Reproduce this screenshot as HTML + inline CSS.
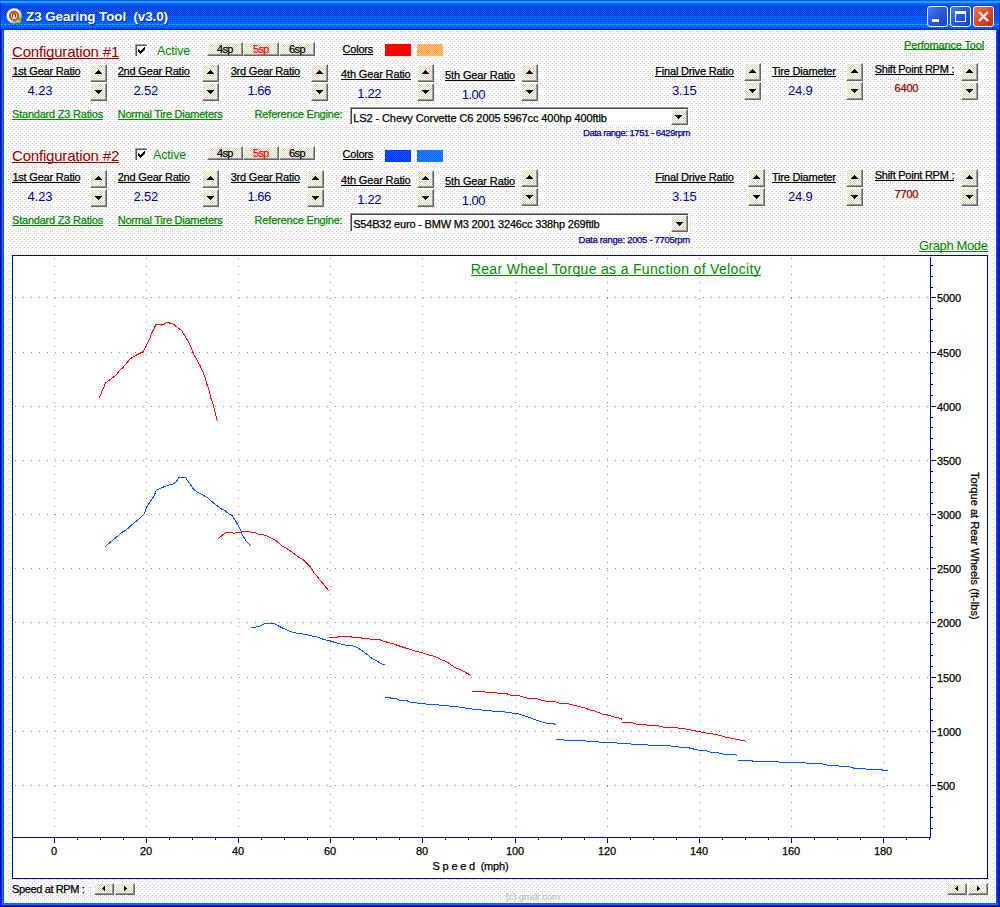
<!DOCTYPE html>
<html lang="en">
<head>
<meta charset="utf-8">
<title>Z3 Gearing Tool (v3.0)</title>
<style>
html,body{margin:0;padding:0}
body{width:1000px;height:907px;position:relative;overflow:hidden;background:#0044dd;font-family:"Liberation Sans",sans-serif;font-size:11px}
#win{position:absolute;left:0;top:0;width:1000px;height:907px;overflow:hidden}
#bg{position:absolute;left:0;top:0}
.t{position:absolute;white-space:pre;display:block}
.s{-webkit-text-stroke:0.25px}
.wb{background:#fff}
.ttl{text-shadow:1px 1px 0 #0a2a9c}
.ul{position:absolute;height:1px;display:block}
.sp{position:absolute;width:15px;height:16px;background:repeating-conic-gradient(#d4d4cc 0 25%,#ffffea 0 50%) 0 0/2px 2px;border-top:1px solid #fffff2;border-left:1px solid #fffff2;border-right:1px solid #666;border-bottom:1px solid #666;box-shadow:inset -1px -1px 0 #999}
.ar{position:absolute;display:block;shape-rendering:crispEdges}
.sp .up{left:4px;top:5px}
.sp .dn{left:4px;top:6px}
.btn{position:absolute;width:34px;height:12px;background:repeating-conic-gradient(#d4d4cc 0 25%,#ffffea 0 50%) 0 0/2px 2px;border-top:1px solid #fffff2;border-left:1px solid #fffff2;border-right:1px solid #666;border-bottom:1px solid #666;box-shadow:inset -1px -1px 0 #999}
.chk{position:absolute;width:11px;height:11px;background:#fff;border-top:1px solid #aaa;border-left:1px solid #999;box-shadow:inset 1px 1px 0 #555}
.chk svg{position:absolute;left:2px;top:2px;shape-rendering:crispEdges}
.sw{position:absolute;width:26px;height:12px}
.combo{position:absolute;width:337px;height:16px;background:#fff;border:1px solid;border-color:#999 #fff #fff #999;box-shadow:inset 1px 1px 0 #444}
.cbtn{position:absolute;right:0;top:1px;width:15px;height:14px;background:repeating-conic-gradient(#d4d4cc 0 25%,#ffffea 0 50%) 0 0/2px 2px;border-top:1px solid #fffff2;border-left:1px solid #fffff2;border-right:1px solid #666;border-bottom:1px solid #666;box-shadow:inset -1px -1px 0 #999}
.cbtn .dn{left:3px;top:5px}
.hb{position:absolute;width:18px;height:10px;background:repeating-conic-gradient(#d4d4cc 0 25%,#ffffea 0 50%) 0 0/2px 2px;border-top:1px solid #fffff2;border-left:1px solid #fffff2;border-right:1px solid #666;border-bottom:1px solid #666;box-shadow:inset -1px -1px 0 #999}
.hb .lf{left:7px;top:2px}
.hb .rt{left:8px;top:2px}
.tb{position:absolute;top:6px;width:19px;height:19px;border:1px solid #f0f4ff;border-radius:3px;background:linear-gradient(135deg,#4a7af0 0%,#2a58dc 50%,#1840c4 100%)}
.gd{stroke:#888;stroke-width:1;stroke-dasharray:1 7;fill:none;shape-rendering:crispEdges}
.ax{stroke:#000099;stroke-width:1;fill:none;shape-rendering:crispEdges}
.cv{fill:none;stroke-width:1;stroke-linejoin:round;shape-rendering:crispEdges}
</style>
</head>
<body>
<div id="win">
<svg id="bg" width="1000" height="907" viewBox="0 0 1000 907">
<defs>
<pattern id="dth" width="8" height="8" patternUnits="userSpaceOnUse" shape-rendering="crispEdges">
<rect width="8" height="8" fill="#fff"/>
<path fill="#ccc" d="M2 1h1v1h-1zM6 1h1v1h-1zM0 3h1v1h-1zM4 3h1v1h-1zM2 5h1v1h-1zM6 5h1v1h-1zM0 7h1v1h-1zM2 7h1v1h-1zM4 7h1v1h-1z"/>
</pattern>
<pattern id="chk" width="2" height="2" patternUnits="userSpaceOnUse" shape-rendering="crispEdges">
<rect width="2" height="2" fill="#0066ff"/>
<path fill="#0033cc" d="M0 0h1v1h-1zM1 1h1v1h-1z"/>
</pattern>
<pattern id="d2" width="2" height="1" patternUnits="userSpaceOnUse" shape-rendering="crispEdges">
<rect width="2" height="1" fill="#0066ff"/><rect width="1" height="1" fill="#0033cc"/>
</pattern>
<pattern id="d4" width="4" height="1" patternUnits="userSpaceOnUse" shape-rendering="crispEdges">
<rect width="4" height="1" fill="#0066ff"/><rect width="1" height="1" fill="#0044aa"/>
</pattern>
<pattern id="l4" width="4" height="1" patternUnits="userSpaceOnUse" shape-rendering="crispEdges">
<rect width="4" height="1" fill="#0066ff"/><rect width="1" height="1" fill="#2f8cff"/><rect x="1" width="1" height="1" fill="#33aaff"/><rect x="2" width="1" height="1" fill="#2f8cff"/>
</pattern>
</defs>
<!-- window frame -->
<rect x="0" y="0" width="1000" height="907" fill="#0055ee"/>
<rect x="0" y="30" width="1" height="877" fill="#0011cc"/>
<rect x="1" y="30" width="1" height="877" fill="#0033cc"/>
<rect x="2" y="30" width="1" height="877" fill="#2266ee"/>
<rect x="3" y="30" width="1" height="877" fill="#0066cc"/>
<rect x="996" y="30" width="1" height="877" fill="#0055ff"/>
<rect x="997" y="30" width="1" height="877" fill="#0033e0"/>
<rect x="998" y="30" width="1" height="877" fill="#0022b0"/>
<rect x="999" y="30" width="1" height="877" fill="#001aa0"/>
<rect x="2" y="903" width="996" height="1" fill="#0066ff"/>
<rect x="2" y="904" width="996" height="1" fill="#2266ff"/>
<rect x="1" y="905" width="998" height="1" fill="#0033cc"/>
<rect x="0" y="906" width="1000" height="1" fill="#000099"/>
<!-- title bar -->
<rect x="0" y="0" width="1000" height="30" fill="#0066ff"/>
<rect x="0" y="0" width="1000" height="1" fill="#0060f0"/>
<rect x="0" y="1" width="1000" height="2" fill="#3399ff"/>
<rect x="0" y="5" width="1000" height="11" fill="url(#chk)"/>
<rect x="0" y="17" width="1000" height="1" fill="url(#d2)"/>
<rect x="1" y="19" width="1000" height="1" fill="url(#d2)"/>
<rect x="0" y="21" width="1000" height="1" fill="url(#d4)"/>
<rect x="0" y="24" width="1000" height="1" fill="url(#l4)"/>
<rect x="0" y="27" width="1000" height="1" fill="url(#d4)"/>
<rect x="0" y="28" width="1000" height="1" fill="url(#chk)"/>
<rect x="0" y="29" width="1000" height="1" fill="#0033cc"/>
<rect x="0" y="3" width="1" height="27" fill="#0033cc"/>
<rect x="999" y="3" width="1" height="27" fill="#0033cc"/>
<!-- client -->
<rect x="4" y="30" width="992" height="873" fill="url(#dth)"/>
</svg>
<!-- title icon -->
<svg style="position:absolute;left:5px;top:7px" width="19" height="19" viewBox="0 0 19 19"><defs><radialGradient id="ig" cx="0.3" cy="0.3" r="0.9"><stop offset="0" stop-color="#fff"/><stop offset="0.45" stop-color="#f4f2ee"/><stop offset="1" stop-color="#7a8a6a"/></radialGradient></defs><circle cx="9.3" cy="9" r="8" fill="url(#ig)" stroke="#222" stroke-opacity="0.45" stroke-width="0.7"/><circle cx="9" cy="8.8" r="4.2" fill="#f3e6d8" stroke="#b43a08" stroke-width="1.7"/><path d="M7.4 10.6v-2.9q0-1.1 1.6-1.1q1.6 0 1.6 1.1v2.9" fill="none" stroke="#8c1c00" stroke-width="1.1"/><rect x="12.2" y="10.5" width="3" height="2.4" fill="#58a832"/><rect x="12.6" y="13.2" width="3" height="2.6" fill="#e8c400"/><rect x="8" y="13" width="3.5" height="2.5" fill="#8a6ab0" opacity="0.6"/></svg>
<div class="tb" style="left:927px"><i style="position:absolute;left:4px;top:12px;width:7px;height:3px;background:#fff"></i></div>
<div class="tb" style="left:950px"><i style="position:absolute;left:4px;top:4px;width:9px;height:7px;border:1px solid #fff;border-top-width:3px"></i></div>
<div class="tb" style="left:973px;background:linear-gradient(135deg,#ec7a52 0%,#d8482a 50%,#b83010 100%)"><svg width="19" height="19" viewBox="0 0 19 19" style="position:absolute;left:0;top:0"><path d="M5 5L14 14M14 5L5 14" stroke="#fff" stroke-width="2.2"/></svg></div>

<div class="sp" style="left:90px;top:64px"><svg class="ar up" width="7" height="4" viewBox="0 0 7 4"><path d="M3 0h1v1h1v1h1v1h1v1H0V3h1V2h1V1h1z"/></svg></div>
<div class="sp" style="left:90px;top:83px"><svg class="ar dn" width="7" height="4" viewBox="0 0 7 4"><path d="M0 0h7v1H6v1H5v1H4v1H3V3H2V2H1V1H0z"/></svg></div>
<div class="sp" style="left:202px;top:64px"><svg class="ar up" width="7" height="4" viewBox="0 0 7 4"><path d="M3 0h1v1h1v1h1v1h1v1H0V3h1V2h1V1h1z"/></svg></div>
<div class="sp" style="left:202px;top:83px"><svg class="ar dn" width="7" height="4" viewBox="0 0 7 4"><path d="M0 0h7v1H6v1H5v1H4v1H3V3H2V2H1V1H0z"/></svg></div>
<div class="sp" style="left:311px;top:64px"><svg class="ar up" width="7" height="4" viewBox="0 0 7 4"><path d="M3 0h1v1h1v1h1v1h1v1H0V3h1V2h1V1h1z"/></svg></div>
<div class="sp" style="left:311px;top:83px"><svg class="ar dn" width="7" height="4" viewBox="0 0 7 4"><path d="M0 0h7v1H6v1H5v1H4v1H3V3H2V2H1V1H0z"/></svg></div>
<div class="sp" style="left:417px;top:64px"><svg class="ar up" width="7" height="4" viewBox="0 0 7 4"><path d="M3 0h1v1h1v1h1v1h1v1H0V3h1V2h1V1h1z"/></svg></div>
<div class="sp" style="left:417px;top:83px"><svg class="ar dn" width="7" height="4" viewBox="0 0 7 4"><path d="M0 0h7v1H6v1H5v1H4v1H3V3H2V2H1V1H0z"/></svg></div>
<div class="sp" style="left:521px;top:64px"><svg class="ar up" width="7" height="4" viewBox="0 0 7 4"><path d="M3 0h1v1h1v1h1v1h1v1H0V3h1V2h1V1h1z"/></svg></div>
<div class="sp" style="left:521px;top:83px"><svg class="ar dn" width="7" height="4" viewBox="0 0 7 4"><path d="M0 0h7v1H6v1H5v1H4v1H3V3H2V2H1V1H0z"/></svg></div>
<div class="sp" style="left:744px;top:63px"><svg class="ar up" width="7" height="4" viewBox="0 0 7 4"><path d="M3 0h1v1h1v1h1v1h1v1H0V3h1V2h1V1h1z"/></svg></div>
<div class="sp" style="left:744px;top:82px"><svg class="ar dn" width="7" height="4" viewBox="0 0 7 4"><path d="M0 0h7v1H6v1H5v1H4v1H3V3H2V2H1V1H0z"/></svg></div>
<div class="sp" style="left:846px;top:63px"><svg class="ar up" width="7" height="4" viewBox="0 0 7 4"><path d="M3 0h1v1h1v1h1v1h1v1H0V3h1V2h1V1h1z"/></svg></div>
<div class="sp" style="left:846px;top:82px"><svg class="ar dn" width="7" height="4" viewBox="0 0 7 4"><path d="M0 0h7v1H6v1H5v1H4v1H3V3H2V2H1V1H0z"/></svg></div>
<div class="sp" style="left:961px;top:63px"><svg class="ar up" width="7" height="4" viewBox="0 0 7 4"><path d="M3 0h1v1h1v1h1v1h1v1H0V3h1V2h1V1h1z"/></svg></div>
<div class="sp" style="left:961px;top:82px"><svg class="ar dn" width="7" height="4" viewBox="0 0 7 4"><path d="M0 0h7v1H6v1H5v1H4v1H3V3H2V2H1V1H0z"/></svg></div>
<div class="sp" style="left:90px;top:170px"><svg class="ar up" width="7" height="4" viewBox="0 0 7 4"><path d="M3 0h1v1h1v1h1v1h1v1H0V3h1V2h1V1h1z"/></svg></div>
<div class="sp" style="left:90px;top:189px"><svg class="ar dn" width="7" height="4" viewBox="0 0 7 4"><path d="M0 0h7v1H6v1H5v1H4v1H3V3H2V2H1V1H0z"/></svg></div>
<div class="sp" style="left:202px;top:170px"><svg class="ar up" width="7" height="4" viewBox="0 0 7 4"><path d="M3 0h1v1h1v1h1v1h1v1H0V3h1V2h1V1h1z"/></svg></div>
<div class="sp" style="left:202px;top:189px"><svg class="ar dn" width="7" height="4" viewBox="0 0 7 4"><path d="M0 0h7v1H6v1H5v1H4v1H3V3H2V2H1V1H0z"/></svg></div>
<div class="sp" style="left:307px;top:170px"><svg class="ar up" width="7" height="4" viewBox="0 0 7 4"><path d="M3 0h1v1h1v1h1v1h1v1H0V3h1V2h1V1h1z"/></svg></div>
<div class="sp" style="left:307px;top:189px"><svg class="ar dn" width="7" height="4" viewBox="0 0 7 4"><path d="M0 0h7v1H6v1H5v1H4v1H3V3H2V2H1V1H0z"/></svg></div>
<div class="sp" style="left:417px;top:170px"><svg class="ar up" width="7" height="4" viewBox="0 0 7 4"><path d="M3 0h1v1h1v1h1v1h1v1H0V3h1V2h1V1h1z"/></svg></div>
<div class="sp" style="left:417px;top:189px"><svg class="ar dn" width="7" height="4" viewBox="0 0 7 4"><path d="M0 0h7v1H6v1H5v1H4v1H3V3H2V2H1V1H0z"/></svg></div>
<div class="sp" style="left:521px;top:169px"><svg class="ar up" width="7" height="4" viewBox="0 0 7 4"><path d="M3 0h1v1h1v1h1v1h1v1H0V3h1V2h1V1h1z"/></svg></div>
<div class="sp" style="left:521px;top:188px"><svg class="ar dn" width="7" height="4" viewBox="0 0 7 4"><path d="M0 0h7v1H6v1H5v1H4v1H3V3H2V2H1V1H0z"/></svg></div>
<div class="sp" style="left:748px;top:169px"><svg class="ar up" width="7" height="4" viewBox="0 0 7 4"><path d="M3 0h1v1h1v1h1v1h1v1H0V3h1V2h1V1h1z"/></svg></div>
<div class="sp" style="left:748px;top:188px"><svg class="ar dn" width="7" height="4" viewBox="0 0 7 4"><path d="M0 0h7v1H6v1H5v1H4v1H3V3H2V2H1V1H0z"/></svg></div>
<div class="sp" style="left:846px;top:169px"><svg class="ar up" width="7" height="4" viewBox="0 0 7 4"><path d="M3 0h1v1h1v1h1v1h1v1H0V3h1V2h1V1h1z"/></svg></div>
<div class="sp" style="left:846px;top:188px"><svg class="ar dn" width="7" height="4" viewBox="0 0 7 4"><path d="M0 0h7v1H6v1H5v1H4v1H3V3H2V2H1V1H0z"/></svg></div>
<div class="sp" style="left:961px;top:169px"><svg class="ar up" width="7" height="4" viewBox="0 0 7 4"><path d="M3 0h1v1h1v1h1v1h1v1H0V3h1V2h1V1h1z"/></svg></div>
<div class="sp" style="left:961px;top:188px"><svg class="ar dn" width="7" height="4" viewBox="0 0 7 4"><path d="M0 0h7v1H6v1H5v1H4v1H3V3H2V2H1V1H0z"/></svg></div>
<div class="btn" style="left:207px;top:42px"></div>
<div class="btn" style="left:243px;top:42px"></div>
<div class="btn" style="left:279px;top:42px"></div>
<div class="chk" style="left:135px;top:44px"><svg width="7" height="7" viewBox="0 0 7 7"><path d="M0 2h1v1h1v1h1V3h1V2h1V1h1V0h1v3H6v1H5v1H4v1H3v1H2V6H1V5H0z"/></svg></div>
<div class="btn" style="left:207px;top:146px"></div>
<div class="btn" style="left:243px;top:146px"></div>
<div class="btn" style="left:279px;top:146px"></div>
<div class="chk" style="left:135px;top:148px"><svg width="7" height="7" viewBox="0 0 7 7"><path d="M0 2h1v1h1v1h1V3h1V2h1V1h1V0h1v3H6v1H5v1H4v1H3v1H2V6H1V5H0z"/></svg></div>
<div class="sw" style="left:385px;top:44px;background:#ff0000"></div>
<div class="sw" style="left:417px;top:44px;background:repeating-conic-gradient(#ff9966 0 25%,#ffcc66 0 50%) 0 0/2px 2px"></div>
<div class="sw" style="left:385px;top:150px;background:repeating-conic-gradient(#0033ff 0 25%,#0055ff 0 50%) 0 0/2px 2px"></div>
<div class="sw" style="left:417px;top:150px;background:repeating-conic-gradient(#0066ff 0 25%,#2a85ff 0 50%) 0 0/2px 2px"></div>
<div class="combo" style="left:350px;top:107px;height:16px"><div class="cbtn" style="height:14px"><svg class="ar dn" style="top:5px;left:3px" width="7" height="4" viewBox="0 0 7 4"><path d="M0 0h7v1H6v1H5v1H4v1H3V3H2V2H1V1H0z"/></svg></div></div>
<div class="combo" style="left:350px;top:213px;height:17px"><div class="cbtn" style="height:15px"><svg class="ar dn" style="top:6px;left:4px" width="7" height="4" viewBox="0 0 7 4"><path d="M0 0h7v1H6v1H5v1H4v1H3V3H2V2H1V1H0z"/></svg></div></div>
<div class="hb" style="left:94px;top:883px"><svg class="ar lf" width="3" height="5" viewBox="0 0 3 5"><path d="M2 0h1v5H2V4H1V3H0V2h1V1h1z"/></svg></div>
<div class="hb" style="left:115px;top:883px"><svg class="ar rt" width="3" height="5" viewBox="0 0 3 5"><path d="M0 0h1v1h1v1h1v1H2v1H1v1H0z"/></svg></div>
<div class="hb" style="left:947px;top:883px"><svg class="ar lf" width="3" height="5" viewBox="0 0 3 5"><path d="M2 0h1v5H2V4H1V3H0V2h1V1h1z"/></svg></div>
<div class="hb" style="left:968px;top:883px"><svg class="ar rt" width="3" height="5" viewBox="0 0 3 5"><path d="M0 0h1v1h1v1h1v1H2v1H1v1H0z"/></svg></div>
<!-- graph -->
<svg style="position:absolute;left:0;top:0" width="1000" height="907" viewBox="0 0 1000 907">
<rect x="12.5" y="255.5" width="975" height="623" fill="#fff" stroke="#000099" stroke-width="1" shape-rendering="crispEdges"/>
<line x1="54.5" y1="258" x2="54.5" y2="830" class="gd"/>
<line x1="146.5" y1="258" x2="146.5" y2="830" class="gd"/>
<line x1="238.5" y1="258" x2="238.5" y2="830" class="gd"/>
<line x1="330.5" y1="258" x2="330.5" y2="830" class="gd"/>
<line x1="422.5" y1="258" x2="422.5" y2="830" class="gd"/>
<line x1="515.5" y1="258" x2="515.5" y2="830" class="gd"/>
<line x1="607.5" y1="258" x2="607.5" y2="830" class="gd"/>
<line x1="699.5" y1="258" x2="699.5" y2="830" class="gd"/>
<line x1="791.5" y1="258" x2="791.5" y2="830" class="gd"/>
<line x1="883.5" y1="258" x2="883.5" y2="830" class="gd"/>
<line x1="15" y1="297.5" x2="930" y2="297.5" class="gd"/>
<line x1="15" y1="352.5" x2="930" y2="352.5" class="gd"/>
<line x1="15" y1="406.5" x2="930" y2="406.5" class="gd"/>
<line x1="15" y1="460.5" x2="930" y2="460.5" class="gd"/>
<line x1="15" y1="514.5" x2="930" y2="514.5" class="gd"/>
<line x1="15" y1="568.5" x2="930" y2="568.5" class="gd"/>
<line x1="15" y1="622.5" x2="930" y2="622.5" class="gd"/>
<line x1="15" y1="677.5" x2="930" y2="677.5" class="gd"/>
<line x1="15" y1="731.5" x2="930" y2="731.5" class="gd"/>
<line x1="15" y1="785.5" x2="930" y2="785.5" class="gd"/>
<path class="ax" d="M12 837.5H931M930.5 257V838M54.5 838v5M77.5 838v2M100.5 838v2M123.5 838v2M146.5 838v5M169.5 838v2M192.5 838v2M215.5 838v2M238.5 838v5M261.5 838v2M284.5 838v2M307.5 838v2M330.5 838v5M353.5 838v2M376.5 838v2M399.5 838v2M422.5 838v5M445.5 838v2M468.5 838v2M491.5 838v2M515.5 838v5M538.5 838v2M561.5 838v2M584.5 838v2M607.5 838v5M630.5 838v2M653.5 838v2M676.5 838v2M699.5 838v5M722.5 838v2M745.5 838v2M768.5 838v2M791.5 838v5M814.5 838v2M837.5 838v2M860.5 838v2M883.5 838v5M906.5 838v2M929.5 838v2M931 265.5h2M931 276.5h2M931 287.5h2M931 297.5h5M931 308.5h2M931 319.5h2M931 330.5h2M931 341.5h2M931 352.5h5M931 362.5h2M931 373.5h2M931 384.5h2M931 395.5h2M931 406.5h5M931 417.5h2M931 427.5h2M931 438.5h2M931 449.5h2M931 460.5h5M931 471.5h2M931 482.5h2M931 492.5h2M931 503.5h2M931 514.5h5M931 525.5h2M931 536.5h2M931 547.5h2M931 557.5h2M931 568.5h5M931 579.5h2M931 590.5h2M931 601.5h2M931 612.5h2M931 622.5h5M931 633.5h2M931 644.5h2M931 655.5h2M931 666.5h2M931 677.5h5M931 687.5h2M931 698.5h2M931 709.5h2M931 720.5h2M931 731.5h5M931 742.5h2M931 752.5h2M931 763.5h2M931 774.5h2M931 785.5h5M931 796.5h2M931 807.5h2M931 817.5h2M931 828.5h2"/>
<polyline points="99.4,397.5 105.7,382.8 112.4,377.9 115.9,375.1 120.5,369.5 122.9,367.7 129.9,359 136.2,355.2 143.2,351.7 145.3,347.8 147.4,342.9 149.9,338.7 151.6,333.1 154.4,328.2 155.8,324.4 158.6,324 161.1,325.1 164.2,324.3 166.7,322.6 168.4,322.3 169.8,323.3 172.6,323.6 175.7,326.1 181.7,330.7 186.6,338.7 190.8,346.7 193.6,354.1 196.4,358.7 200.6,366.7 205.1,377.2 206.9,384.2 209.4,390.9 211.1,398.9 213.2,404.5 215.3,413.6 217.4,421.3" stroke="#ff0000" class="cv"/>
<polyline points="218.5,538.5 225.6,532.4 231.5,532.4 234.1,533.4 237.3,532.4 243.8,531.7 249,531.4 251,532.4 255.5,532.6 258.8,534.3 262,534.6 266.6,535.6 271.1,538.2 275.7,540.4 282.8,546.4 288.7,549.6 295.8,555.1 299.7,558 303,559.7 310.8,567.5 314,572.7 320.5,580.5 328.6,590.6" stroke="#ff0000" class="cv"/>
<polyline points="329.1,637.3 336.8,637.3 339.2,636.3 350.4,636.3 352,637.3 360,637.3 362.4,638.4 368.8,638.4 371.2,639.5 379.2,639.5 384,641.3 393.6,644 406.4,648.3 416,651.2 422.4,652.8 430.4,655.5 435.2,656.5 441.6,659.7 446.4,661.6 454.4,667.2 460.8,669.9 471.2,675.5" stroke="#ff0000" class="cv"/>
<polyline points="472,691.4 484,691.4 486,692.4 496,692.4 498,693.4 506,693.4 510,695 518,695.4 524,697.4 529,698.4 536,698.4 541,700 547,701.4 554,701.4 560,703.4 567,703.6 577,706 585,708 590,710 595,711 602,714 609,715.4 615,717.4 621,718.4 622,719.4" stroke="#ff0000" class="cv"/>
<polyline points="622,722.4 631,722.4 637,724.4 646,724.4 648,725.4 657.5,725.5 665,727.5 673.75,727.5 685,728.75 697.5,731.25 707.5,733.25 717.5,734.75 725,737 735,739 746.25,741.25" stroke="#ff0000" class="cv"/>
<polyline points="105.2,546.6 116.3,537.3 122.2,532.2 125.6,530.5 134.1,522.8 137.5,520.3 144.3,513.5 146.9,506.7 150.3,501.6 153.7,496.5 156.5,490.2 166.4,485.7 173.2,484 175.8,482 179.2,477.4 185.4,477.4 188.5,482 193.6,489.3 197,491.9 203.8,495.6 207.2,497.6 214,503.3 221.7,509.2 225.1,510.6 229.3,514.3 231.9,515.2 235.3,520.3 239.5,527.9 242.9,535.6 246.3,541.5 250.6,545.8" stroke="#0055ff" class="cv"/>
<polyline points="251.2,627.3 255.2,627.1 260,626 265.6,623.3 273.6,623.3 280,626.8 288,630.5 294.4,632.9 300.8,633.5 307.2,634.8 313.6,636.4 319.2,637.5 323.2,639.3 329.6,640.7 336,642.8 345.6,645.2 351.2,645.5 355.2,646.5 360.8,649.7 366.4,654 372,658.3 377.6,661.5 382.4,664.1 384.8,664.6" stroke="#0055ff" class="cv"/>
<polyline points="385.4,697.4 390,697.4 391,698.4 396,698.4 400,700.4 406,700.4 411,702.4 416,702.4 418,703.4 425,703.4 427,704.4 438,704.4 440,705.4 448,705.4 450,706.4 458,706.4 460,707.4 464,707.4 466,708.4 471,708.4 473,709.4 481,709.4 483,710.4 491,710.4 493,711.4 504,711.4 506,712.4 511,712.4 513,713.4 517,713.4 527,716.6 537,720.4 547,723.4 553,723.4 555.6,724.4" stroke="#0055ff" class="cv"/>
<polyline points="556,739.4 563,739.4 565,740.4 585,740.4 587,741.4 598,741.4 600,742.4 616,742.4 618,743.4 630,743.4 632,744.4 647,744.4 649,745.4 670,745.5 672.5,746.5 677.5,746.5 680,747.5 687.5,747.5 697.5,750 705,750.5 710,752 717.5,752.5 723.75,754.25 735,754.5 737.5,755.5" stroke="#0055ff" class="cv"/>
<polyline points="738.25,760.5 751.25,760.5 753.75,761.5 777.5,761.5 780,762.5 805,762.5 807.5,763.5 821.25,763.5 828.75,765.5 837.5,765.5 840,766.5 848.75,766.5 855,768.5 865,768.5 867.5,769.5 881.25,769.5 883.75,770.5 887.5,770.5" stroke="#0055ff" class="cv"/>
</svg>
<span class="t ttl" style="left:26px;top:10.37px;font-size:13.5px;line-height:13.5px;color:#fff;letter-spacing:-0.11px;font-weight:bold;">Z3 Gearing Tool  (v3.0)</span>
<span class="t" style="left:12px;top:44.3px;font-size:15px;line-height:15px;color:#990000;letter-spacing:-0.19px;">Configuration #1</span>
<i class="ul" style="left:12px;top:58px;width:107px;background:#990000"></i>
<span class="t" style="left:157px;top:45.02px;font-size:12.5px;line-height:12.5px;color:#008600;letter-spacing:-0.17px;">Active</span>
<span class="t s" style="left:217px;top:43.69px;font-size:11px;line-height:11px;color:#000;letter-spacing:-0.72px;">4sp</span>
<span class="t s" style="left:253px;top:43.69px;font-size:11px;line-height:11px;color:#ff0000;letter-spacing:-0.68px;">5sp</span>
<span class="t s" style="left:289px;top:43.69px;font-size:11px;line-height:11px;color:#000;letter-spacing:-0.58px;">6sp</span>
<span class="t s" style="left:342.6px;top:44.09px;font-size:11px;line-height:11px;color:#000;letter-spacing:-0.23px;">Colors</span>
<i class="ul" style="left:343px;top:54px;width:30px;background:#000"></i>
<span class="t s" style="left:12.4px;top:65.69px;font-size:11px;line-height:11px;color:#000;letter-spacing:-0.2px;">1st Gear Ratio</span>
<i class="ul" style="left:12px;top:76px;width:68px;background:#000"></i>
<span class="t s" style="left:117.7px;top:65.69px;font-size:11px;line-height:11px;color:#000;letter-spacing:-0.19px;">2nd Gear Ratio</span>
<i class="ul" style="left:118px;top:76px;width:72px;background:#000"></i>
<span class="t s" style="left:230.7px;top:65.69px;font-size:11px;line-height:11px;color:#000;letter-spacing:-0.2px;">3rd Gear Ratio</span>
<i class="ul" style="left:231px;top:76px;width:69px;background:#000"></i>
<span class="t s" style="left:341px;top:68.89px;font-size:11px;line-height:11px;color:#000;letter-spacing:-0.14px;">4th Gear Ratio</span>
<i class="ul" style="left:341px;top:79px;width:70px;background:#000"></i>
<span class="t s" style="left:445px;top:69.99px;font-size:11px;line-height:11px;color:#000;letter-spacing:-0.11px;">5th Gear Ratio</span>
<i class="ul" style="left:445px;top:80px;width:70px;background:#000"></i>
<span class="t s" style="left:655.2px;top:65.69px;font-size:11px;line-height:11px;color:#000;letter-spacing:-0.17px;">Final Drive Ratio</span>
<i class="ul" style="left:655px;top:76px;width:79px;background:#000"></i>
<span class="t s" style="left:772px;top:65.69px;font-size:11px;line-height:11px;color:#000;letter-spacing:-0.2px;">Tire Diameter</span>
<i class="ul" style="left:772px;top:76px;width:64px;background:#000"></i>
<span class="t s" style="left:874.7px;top:64.09px;font-size:11px;line-height:11px;color:#000;letter-spacing:-0.25px;">Shift Point RPM :</span>
<i class="ul" style="left:875px;top:74px;width:79px;background:#000"></i>
<span class="t" style="left:27.6px;top:84px;font-size:13px;line-height:13px;color:#000099;letter-spacing:-0.13px;">4.23</span>
<span class="t" style="left:133.4px;top:84px;font-size:13px;line-height:13px;color:#000099;letter-spacing:-0.13px;">2.52</span>
<span class="t" style="left:247.6px;top:83.5px;font-size:13px;line-height:13px;color:#000099;letter-spacing:-0.55px;">1.66</span>
<span class="t" style="left:357.3px;top:86.6px;font-size:13px;line-height:13px;color:#000099;letter-spacing:-0.35px;">1.22</span>
<span class="t" style="left:461.7px;top:87.8px;font-size:13px;line-height:13px;color:#000099;letter-spacing:-0.48px;">1.00</span>
<span class="t" style="left:672px;top:84px;font-size:13px;line-height:13px;color:#000099;letter-spacing:-0.2px;">3.15</span>
<span class="t" style="left:788px;top:84px;font-size:13px;line-height:13px;color:#000099;letter-spacing:-0.23px;">24.9</span>
<span class="t s" style="left:894.5px;top:82.69px;font-size:11px;line-height:11px;color:#990000;letter-spacing:-0.17px;">6400</span>
<span class="t s" style="left:12px;top:108.69px;font-size:11px;line-height:11px;color:#008600;letter-spacing:-0.21px;">Standard Z3 Ratios</span>
<i class="ul" style="left:12px;top:119px;width:91px;background:#008600"></i>
<span class="t s" style="left:117.7px;top:108.69px;font-size:11px;line-height:11px;color:#008600;letter-spacing:-0.25px;">Normal Tire Diameters</span>
<i class="ul" style="left:118px;top:119px;width:104px;background:#008600"></i>
<span class="t s" style="left:254.6px;top:109.09px;font-size:11px;line-height:11px;color:#008600;letter-spacing:-0.19px;">Reference Engine:</span>
<span class="t s" style="left:353.2px;top:112.69px;font-size:11px;line-height:11px;color:#000;letter-spacing:-0.09px;">LS2 - Chevy Corvette C6 2005 5967cc 400hp 400ftlb</span>
<span class="t s" style="left:583px;top:127.96px;font-size:9.5px;line-height:9.5px;color:#000099;letter-spacing:-0.48px;">Data range: 1751 - 6429rpm</span>
<span class="t" style="left:12px;top:148.3px;font-size:15px;line-height:15px;color:#990000;letter-spacing:-0.19px;">Configuration #2</span>
<i class="ul" style="left:12px;top:162px;width:107px;background:#990000"></i>
<span class="t" style="left:153px;top:149.02px;font-size:12.5px;line-height:12.5px;color:#008600;letter-spacing:-0.17px;">Active</span>
<span class="t s" style="left:217px;top:147.69px;font-size:11px;line-height:11px;color:#000;letter-spacing:-0.72px;">4sp</span>
<span class="t s" style="left:253px;top:147.69px;font-size:11px;line-height:11px;color:#ff0000;letter-spacing:-0.68px;">5sp</span>
<span class="t s" style="left:289px;top:147.69px;font-size:11px;line-height:11px;color:#000;letter-spacing:-0.58px;">6sp</span>
<span class="t s" style="left:342.6px;top:149.09px;font-size:11px;line-height:11px;color:#000;letter-spacing:-0.23px;">Colors</span>
<i class="ul" style="left:343px;top:159px;width:30px;background:#000"></i>
<span class="t s" style="left:12.4px;top:171.69px;font-size:11px;line-height:11px;color:#000;letter-spacing:-0.2px;">1st Gear Ratio</span>
<i class="ul" style="left:12px;top:182px;width:68px;background:#000"></i>
<span class="t s" style="left:117.7px;top:171.69px;font-size:11px;line-height:11px;color:#000;letter-spacing:-0.19px;">2nd Gear Ratio</span>
<i class="ul" style="left:118px;top:182px;width:72px;background:#000"></i>
<span class="t s" style="left:230.7px;top:171.69px;font-size:11px;line-height:11px;color:#000;letter-spacing:-0.2px;">3rd Gear Ratio</span>
<i class="ul" style="left:231px;top:182px;width:69px;background:#000"></i>
<span class="t s" style="left:341px;top:174.89px;font-size:11px;line-height:11px;color:#000;letter-spacing:-0.14px;">4th Gear Ratio</span>
<i class="ul" style="left:341px;top:185px;width:70px;background:#000"></i>
<span class="t s" style="left:445px;top:175.99px;font-size:11px;line-height:11px;color:#000;letter-spacing:-0.11px;">5th Gear Ratio</span>
<i class="ul" style="left:445px;top:186px;width:70px;background:#000"></i>
<span class="t s" style="left:655.2px;top:171.69px;font-size:11px;line-height:11px;color:#000;letter-spacing:-0.17px;">Final Drive Ratio</span>
<i class="ul" style="left:655px;top:182px;width:79px;background:#000"></i>
<span class="t s" style="left:772px;top:171.69px;font-size:11px;line-height:11px;color:#000;letter-spacing:-0.2px;">Tire Diameter</span>
<i class="ul" style="left:772px;top:182px;width:64px;background:#000"></i>
<span class="t s" style="left:874.7px;top:170.09px;font-size:11px;line-height:11px;color:#000;letter-spacing:-0.25px;">Shift Point RPM :</span>
<i class="ul" style="left:875px;top:180px;width:79px;background:#000"></i>
<span class="t" style="left:27.6px;top:190px;font-size:13px;line-height:13px;color:#000099;letter-spacing:-0.13px;">4.23</span>
<span class="t" style="left:133.4px;top:190px;font-size:13px;line-height:13px;color:#000099;letter-spacing:-0.13px;">2.52</span>
<span class="t" style="left:247.6px;top:189.5px;font-size:13px;line-height:13px;color:#000099;letter-spacing:-0.55px;">1.66</span>
<span class="t" style="left:357.3px;top:192.6px;font-size:13px;line-height:13px;color:#000099;letter-spacing:-0.35px;">1.22</span>
<span class="t" style="left:461.7px;top:193.8px;font-size:13px;line-height:13px;color:#000099;letter-spacing:-0.48px;">1.00</span>
<span class="t" style="left:672px;top:190px;font-size:13px;line-height:13px;color:#000099;letter-spacing:-0.2px;">3.15</span>
<span class="t" style="left:788px;top:190px;font-size:13px;line-height:13px;color:#000099;letter-spacing:-0.23px;">24.9</span>
<span class="t s" style="left:894.5px;top:188.69px;font-size:11px;line-height:11px;color:#990000;letter-spacing:-0.17px;">7700</span>
<span class="t s" style="left:12px;top:214.69px;font-size:11px;line-height:11px;color:#008600;letter-spacing:-0.21px;">Standard Z3 Ratios</span>
<i class="ul" style="left:12px;top:225px;width:91px;background:#008600"></i>
<span class="t s" style="left:117.7px;top:214.69px;font-size:11px;line-height:11px;color:#008600;letter-spacing:-0.25px;">Normal Tire Diameters</span>
<i class="ul" style="left:118px;top:225px;width:104px;background:#008600"></i>
<span class="t s" style="left:254.6px;top:215.09px;font-size:11px;line-height:11px;color:#008600;letter-spacing:-0.19px;">Reference Engine:</span>
<span class="t s" style="left:353.2px;top:218.69px;font-size:11px;line-height:11px;color:#000;letter-spacing:-0.19px;">S54B32 euro - BMW M3 2001 3246cc 338hp 269ftlb</span>
<span class="t s" style="left:578.6px;top:234.76px;font-size:9.5px;line-height:9.5px;color:#000099;letter-spacing:-0.31px;">Data range: 2005 - 7705rpm</span>
<span class="t s" style="left:904px;top:39.69px;font-size:11px;line-height:11px;color:#008600;letter-spacing:-0.16px;">Perfomance Tool</span>
<i class="ul" style="left:904px;top:49px;width:80px;background:#008600"></i>
<span class="t" style="left:919px;top:238.7px;font-size:13px;line-height:13px;color:#008600;letter-spacing:-0.37px;">Graph Mode</span>
<i class="ul" style="left:919px;top:251px;width:69px;background:#008600"></i>
<span class="t wb" style="left:470.8px;top:262.15px;font-size:14px;line-height:14px;color:#008600;letter-spacing:0.33px;">Rear Wheel Torque as a Function of Velocity</span>
<i class="ul" style="left:471px;top:275px;width:290px;background:#008600"></i>
<span class="t s" style="left:432.6px;top:861.29px;font-size:11px;line-height:11px;color:#000;letter-spacing:-0.19px;">S p e e d  (mph)</span>
<span class="t s" style="left:12px;top:884.49px;font-size:11px;line-height:11px;color:#000;letter-spacing:-0.37px;">Speed at RPM :</span>
<span class="t s rot" style="left:980.31px;top:472px;font-size:11px;line-height:11px;color:#000;letter-spacing:0.03px;transform-origin:0 0;transform:rotate(90deg);">Torque at Rear Wheels (ft-lbs)</span>
<span class="t s" style="left:505.4px;top:891.96px;font-size:9.5px;line-height:9.5px;color:#c4c4c4;letter-spacing:-0.07px;">(c) gmdr.com</span>
<span class="t s" style="left:51px;top:845.99px;font-size:11px;line-height:11px;color:#000;letter-spacing:-0.12px;">0</span>
<span class="t s" style="left:140px;top:845.99px;font-size:11px;line-height:11px;color:#000;letter-spacing:-0.12px;">20</span>
<span class="t s" style="left:232px;top:845.99px;font-size:11px;line-height:11px;color:#000;letter-spacing:-0.12px;">40</span>
<span class="t s" style="left:324px;top:845.99px;font-size:11px;line-height:11px;color:#000;letter-spacing:-0.12px;">60</span>
<span class="t s" style="left:416px;top:845.99px;font-size:11px;line-height:11px;color:#000;letter-spacing:-0.12px;">80</span>
<span class="t s" style="left:506px;top:845.99px;font-size:11px;line-height:11px;color:#000;letter-spacing:-0.12px;">100</span>
<span class="t s" style="left:598px;top:845.99px;font-size:11px;line-height:11px;color:#000;letter-spacing:-0.12px;">120</span>
<span class="t s" style="left:690px;top:845.99px;font-size:11px;line-height:11px;color:#000;letter-spacing:-0.12px;">140</span>
<span class="t s" style="left:782px;top:845.99px;font-size:11px;line-height:11px;color:#000;letter-spacing:-0.12px;">160</span>
<span class="t s" style="left:874px;top:845.99px;font-size:11px;line-height:11px;color:#000;letter-spacing:-0.12px;">180</span>
<span class="t s" style="left:937px;top:292.99px;font-size:11px;line-height:11px;color:#000;letter-spacing:-0.12px;">5000</span>
<span class="t s" style="left:937px;top:347.99px;font-size:11px;line-height:11px;color:#000;letter-spacing:-0.12px;">4500</span>
<span class="t s" style="left:937px;top:401.99px;font-size:11px;line-height:11px;color:#000;letter-spacing:-0.12px;">4000</span>
<span class="t s" style="left:937px;top:455.99px;font-size:11px;line-height:11px;color:#000;letter-spacing:-0.12px;">3500</span>
<span class="t s" style="left:937px;top:509.99px;font-size:11px;line-height:11px;color:#000;letter-spacing:-0.12px;">3000</span>
<span class="t s" style="left:937px;top:563.99px;font-size:11px;line-height:11px;color:#000;letter-spacing:-0.12px;">2500</span>
<span class="t s" style="left:937px;top:617.99px;font-size:11px;line-height:11px;color:#000;letter-spacing:-0.12px;">2000</span>
<span class="t s" style="left:937px;top:672.99px;font-size:11px;line-height:11px;color:#000;letter-spacing:-0.12px;">1500</span>
<span class="t s" style="left:937px;top:726.99px;font-size:11px;line-height:11px;color:#000;letter-spacing:-0.12px;">1000</span>
<span class="t s" style="left:937px;top:780.99px;font-size:11px;line-height:11px;color:#000;letter-spacing:-0.12px;">500</span>
</div>
</body>
</html>
